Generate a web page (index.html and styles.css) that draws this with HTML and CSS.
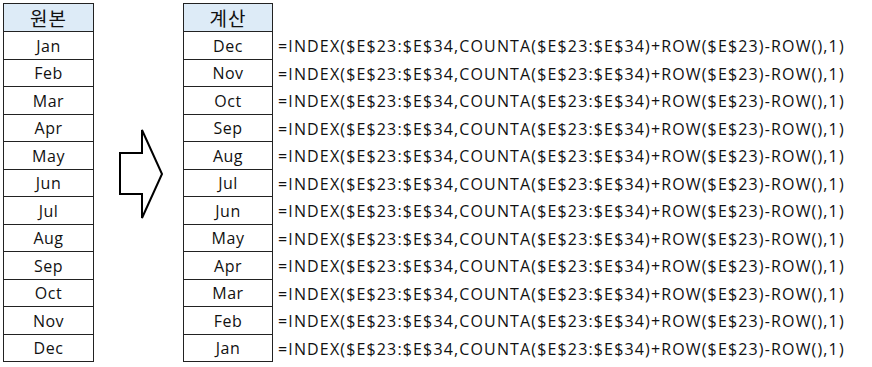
FILE: index.html
```html
<!DOCTYPE html>
<html lang="ko">
<head>
<meta charset="utf-8">
<link rel="stylesheet" href="styles.css">
</head>
<body>
<div class="sheet">
  <div class="table src">
    <div class="cell head">원본</div>
    <div class="cell">Jan</div>
    <div class="cell">Feb</div>
    <div class="cell">Mar</div>
    <div class="cell">Apr</div>
    <div class="cell">May</div>
    <div class="cell">Jun</div>
    <div class="cell">Jul</div>
    <div class="cell">Aug</div>
    <div class="cell">Sep</div>
    <div class="cell">Oct</div>
    <div class="cell">Nov</div>
    <div class="cell">Dec</div>
  </div>
  <div class="arrow-col">
    <svg class="arrow" width="89" height="362" viewBox="94 3 89 362">
      <polygon points="120,153 142,153 142,130 162,174 142,218 142,194 120,194" fill="#fff" stroke="#000" stroke-width="2" stroke-linejoin="miter"/>
    </svg>
  </div>
  <div class="table calc">
    <div class="cell head">계산</div><div class="formula"></div>
    <div class="cell">Dec</div><div class="formula">=INDEX($E$23:$E$34,COUNTA($E$23:$E$34)+ROW($E$23)-ROW(),1)</div>
    <div class="cell">Nov</div><div class="formula">=INDEX($E$23:$E$34,COUNTA($E$23:$E$34)+ROW($E$23)-ROW(),1)</div>
    <div class="cell">Oct</div><div class="formula">=INDEX($E$23:$E$34,COUNTA($E$23:$E$34)+ROW($E$23)-ROW(),1)</div>
    <div class="cell">Sep</div><div class="formula">=INDEX($E$23:$E$34,COUNTA($E$23:$E$34)+ROW($E$23)-ROW(),1)</div>
    <div class="cell">Aug</div><div class="formula">=INDEX($E$23:$E$34,COUNTA($E$23:$E$34)+ROW($E$23)-ROW(),1)</div>
    <div class="cell">Jul</div><div class="formula">=INDEX($E$23:$E$34,COUNTA($E$23:$E$34)+ROW($E$23)-ROW(),1)</div>
    <div class="cell">Jun</div><div class="formula">=INDEX($E$23:$E$34,COUNTA($E$23:$E$34)+ROW($E$23)-ROW(),1)</div>
    <div class="cell">May</div><div class="formula">=INDEX($E$23:$E$34,COUNTA($E$23:$E$34)+ROW($E$23)-ROW(),1)</div>
    <div class="cell">Apr</div><div class="formula">=INDEX($E$23:$E$34,COUNTA($E$23:$E$34)+ROW($E$23)-ROW(),1)</div>
    <div class="cell">Mar</div><div class="formula">=INDEX($E$23:$E$34,COUNTA($E$23:$E$34)+ROW($E$23)-ROW(),1)</div>
    <div class="cell">Feb</div><div class="formula">=INDEX($E$23:$E$34,COUNTA($E$23:$E$34)+ROW($E$23)-ROW(),1)</div>
    <div class="cell">Jan</div><div class="formula">=INDEX($E$23:$E$34,COUNTA($E$23:$E$34)+ROW($E$23)-ROW(),1)</div>
  </div>
</div>
</body>
</html>
```
FILE: styles.css
```css
html, body {
  margin: 0;
  padding: 0;
  background: #fff;
}
body {
  font-family: "Open Sans", "Noto Sans CJK KR", sans-serif;
  color: #111;
  font-size: 16px;
}
.sheet {
  display: flex;
  align-items: flex-start;
  padding: 3px 0 0 3px;
}
.table {
  display: grid;
  grid-template-rows: 29px repeat(6, 28px 27px);
}
.src {
  grid-template-columns: 91px;
}
.calc {
  grid-template-columns: 90px auto;
}
.cell {
  display: flex;
  align-items: center;
  justify-content: center;
  border: 1px solid #222;
  margin-top: -1px;
  box-sizing: border-box;
  height: calc(100% + 1px);
  line-height: 1;
  letter-spacing: 0.5px;
}
.table > .cell:first-child {
  margin-top: 0;
  height: 100%;
}
.cell.head {
  background: #ddebf7;
  font-family: "Noto Sans CJK KR", sans-serif;
  font-size: 19px;
  letter-spacing: 1px;
}
.arrow-col {
  width: 89px;
  flex: none;
}
.arrow {
  display: block;
}
.formula {
  display: flex;
  align-items: center;
  padding-left: 5px;
  white-space: nowrap;
  line-height: 1;
  letter-spacing: 1.15px;
}
```
